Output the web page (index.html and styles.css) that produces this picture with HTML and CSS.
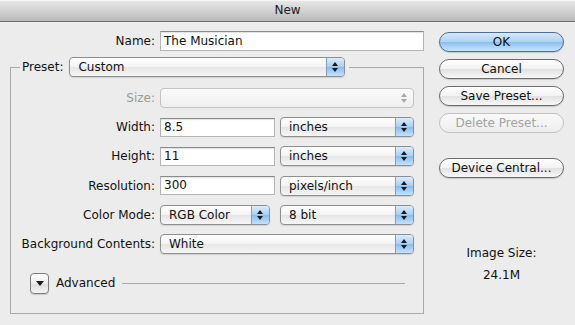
FILE: index.html
```html
<!DOCTYPE html>
<html lang="en">
<head>
    <meta charset="UTF-8">
    <title>New</title>
    <link rel="stylesheet" href="styles.css">
</head>
<body>
    <div class="titlebar">New</div>

    <div class="main">
        <div class="form">
            <div class="name-row">
                <label class="label">Name:</label>
                <div class="input name-input">The Musician</div>
            </div>

            <fieldset class="group">
                <legend class="legend">
                    <span class="legend-label">Preset:</span>
                    <div class="popup preset-popup"><span class="popup-label">Custom</span><span class="popup-btn"></span></div>
                </legend>

                <div class="rows">
                    <label class="label disabled">Size:</label>
                    <div class="popup popup-disabled span2"><span class="popup-label"></span><span class="popup-btn"></span></div>

                    <label class="label">Width:</label>
                    <div class="input">8.5</div>
                    <div class="popup"><span class="popup-label">inches</span><span class="popup-btn"></span></div>

                    <label class="label">Height:</label>
                    <div class="input">11</div>
                    <div class="popup"><span class="popup-label">inches</span><span class="popup-btn"></span></div>

                    <label class="label">Resolution:</label>
                    <div class="input">300</div>
                    <div class="popup"><span class="popup-label">pixels/inch</span><span class="popup-btn"></span></div>

                    <label class="label">Color Mode:</label>
                    <div class="popup mode-popup"><span class="popup-label">RGB Color</span><span class="popup-btn"></span></div>
                    <div class="popup"><span class="popup-label">8 bit</span><span class="popup-btn"></span></div>

                    <label class="label">Background Contents:</label>
                    <div class="popup span2"><span class="popup-label">White</span><span class="popup-btn"></span></div>
                </div>

                <div class="advanced">
                    <span class="disclosure"></span>
                    <span class="advanced-label">Advanced</span>
                    <span class="advanced-line"></span>
                </div>
            </fieldset>
        </div>

        <div class="side">
            <button class="btn btn-default">OK</button>
            <button class="btn">Cancel</button>
            <button class="btn">Save Preset...</button>
            <button class="btn btn-disabled">Delete Preset...</button>
            <button class="btn btn-device">Device Central...</button>

            <div class="image-size">
                <div>Image Size:</div>
                <div class="image-size-value">24.1M</div>
            </div>
        </div>
    </div>
</body>
</html>
```

FILE: styles.css
```css
html, body {
    margin: 0;
    padding: 0;
    background: #ececec;
    font-family: "DejaVu Sans", "Liberation Sans", sans-serif;
    font-size: 12px;
    color: #111;
}

/* Title bar */
.titlebar {
    height: 21px;
    line-height: 21px;
    text-align: center;
    font-size: 12px;
    color: #222;
    background: linear-gradient(#e9e9e9, #d2d2d2 50%, #b9b9b9);
    border-bottom: 1px solid #6f6f6f;
    box-shadow: inset 0 1px 0 #f6f6f6;
}

.main {
    display: flex;
    padding: 9px 0 0 10px;
}

.form {
    width: 414px;
}

.label {
    text-align: right;
    white-space: nowrap;
}

.label.disabled {
    color: #9a9a9a;
}

/* Name */
.name-row {
    display: flex;
    align-items: center;
    gap: 5px;
}

.name-row .label {
    width: 145px;
}

.input {
    box-sizing: border-box;
    height: 19px;
    line-height: 17px;
    padding-left: 3px;
    background: #fff;
    border: 1px solid #b4b4b4;
    border-top-color: #8a8a8a;
    box-shadow: inset 0 1px 1px rgba(0, 0, 0, 0.12);
}

.name-input {
    width: 264px;
    height: 20px;
    line-height: 18px;
}

/* Preset group */
.group {
    margin: 6px 0 0;
    padding: 11px 9px 19px;
    border: 1px solid #a9a9a9;
}

.legend {
    display: flex;
    align-items: center;
    gap: 6px;
    padding: 0 4px 0 2px;
}

.preset-popup {
    width: 276px;
}

.rows {
    display: grid;
    grid-template-columns: 135px 115px 134px;
    column-gap: 5px;
    row-gap: 9.2px;
    align-items: center;
}

.span2 {
    grid-column: span 2;
}

/* Popup menus */
.popup {
    box-sizing: border-box;
    display: flex;
    height: 20px;
    border: 1px solid #8e8e8e;
    border-radius: 4px;
    background: linear-gradient(#ffffff, #f3f3f3 50%, #e6e6e6 52%, #f6f6f6);
    box-shadow: 0 1px 1px rgba(0, 0, 0, 0.12);
    overflow: hidden;
}

.popup-label {
    flex: 1;
    padding-left: 8px;
    line-height: 18px;
    white-space: nowrap;
}

.popup-btn {
    position: relative;
    width: 17px;
    background: linear-gradient(#dcecfb, #aacff4 48%, #88bcf0 52%, #c4e2fb);
    border-left: 1px solid #7d9fcc;
}

.popup-btn::before,
.popup-btn::after {
    content: "";
    position: absolute;
    left: 5px;
    border-left: 3.5px solid transparent;
    border-right: 3.5px solid transparent;
}

.popup-btn::before {
    top: 4px;
    border-bottom: 4px solid #1a1a1a;
}

.popup-btn::after {
    bottom: 4px;
    border-top: 4px solid #1a1a1a;
}

.popup-disabled {
    border-color: #c4c4c4;
    box-shadow: none;
    background: linear-gradient(#fbfbfb, #efefef);
}

.popup-disabled .popup-btn {
    background: none;
    border-left: none;
}

.popup-disabled .popup-btn::before {
    border-bottom-color: #a8a8a8;
}

.popup-disabled .popup-btn::after {
    border-top-color: #a8a8a8;
}

.mode-popup {
    width: 110px;
}

/* Advanced */
.advanced {
    display: flex;
    align-items: center;
    margin: 19px 9px 0 10px;
    height: 21px;
}

.disclosure {
    position: relative;
    box-sizing: border-box;
    width: 19px;
    height: 21px;
    border: 1px solid #7d7d7d;
    border-radius: 4px;
    background: linear-gradient(#ffffff, #ececec 50%, #dedede 52%, #f4f4f4);
    box-shadow: 0 1px 1px rgba(0, 0, 0, 0.15);
}

.disclosure::after {
    content: "";
    position: absolute;
    left: 5px;
    top: 7px;
    border-left: 4px solid transparent;
    border-right: 4px solid transparent;
    border-top: 5px solid #1a1a1a;
}

.advanced-label {
    margin-left: 7px;
}

.advanced-line {
    flex: 1;
    height: 1px;
    margin-left: 7px;
    background: #a9a9a9;
}

/* Buttons */
.side {
    display: flex;
    flex-direction: column;
    width: 125px;
    margin-left: 15px;
    padding-top: 1px;
}

.btn {
    height: 20px;
    margin-bottom: 7px;
    padding: 0;
    font-family: inherit;
    font-size: 12px;
    color: #111;
    border: 1px solid #6c6c6c;
    border-radius: 10px;
    background: linear-gradient(#ffffff, #f2f2f2 50%, #e2e2e2 52%, #f7f7f7);
    box-shadow: 0 1px 1px rgba(0, 0, 0, 0.15);
}

.btn-default {
    border-color: #4d6d9a;
    background: linear-gradient(#d7e9fb, #aed2f5 48%, #8cc0f0 52%, #c8e4fc);
}

.btn-disabled {
    color: #a3a3a3;
    border-color: #c2c2c2;
    box-shadow: none;
    background: linear-gradient(#fafafa, #ededed);
}

.btn-device {
    margin-top: 18px;
}

.image-size {
    margin-top: 57px;
    text-align: center;
    line-height: 22px;
}
```
